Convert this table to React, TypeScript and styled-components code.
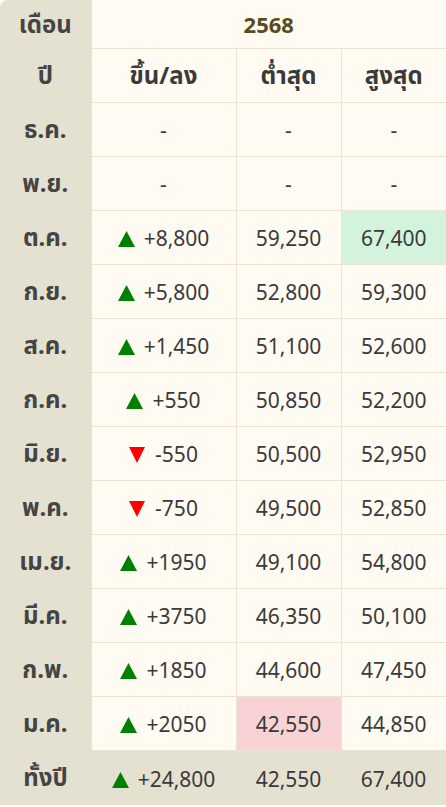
import React from "react";
import styled, { createGlobalStyle } from "styled-components";

const GlobalStyle = createGlobalStyle`
  html, body {
    margin: 0;
    padding: 0;
    background: #ffffff;
  }
  body {
    font-family: "Noto Sans", "Noto Sans Thai", "Liberation Sans", sans-serif;
  }
`;

type Dir = "up" | "down" | "none";

type Row = {
  month: string;
  change: string;
  dir: Dir;
  low: string;
  high: string;
  mark?: "low" | "high";
};

const ROWS: Row[] = [
  { month: "ธ.ค.", change: "-", dir: "none", low: "-", high: "-" },
  { month: "พ.ย.", change: "-", dir: "none", low: "-", high: "-" },
  { month: "ต.ค.", change: "+8,800", dir: "up", low: "59,250", high: "67,400", mark: "high" },
  { month: "ก.ย.", change: "+5,800", dir: "up", low: "52,800", high: "59,300" },
  { month: "ส.ค.", change: "+1,450", dir: "up", low: "51,100", high: "52,600" },
  { month: "ก.ค.", change: "+550", dir: "up", low: "50,850", high: "52,200" },
  { month: "มิ.ย.", change: "-550", dir: "down", low: "50,500", high: "52,950" },
  { month: "พ.ค.", change: "-750", dir: "down", low: "49,500", high: "52,850" },
  { month: "เม.ย.", change: "+1950", dir: "up", low: "49,100", high: "54,800" },
  { month: "มี.ค.", change: "+3750", dir: "up", low: "46,350", high: "50,100" },
  { month: "ก.พ.", change: "+1850", dir: "up", low: "44,600", high: "47,450" },
  { month: "ม.ค.", change: "+2050", dir: "up", low: "42,550", high: "44,850", mark: "low" },
];

const Table = styled.table`
  width: 446px;
  border-collapse: collapse;
  border-spacing: 0;
  table-layout: fixed;
  background: #fffaf2;
  color: #3a3a3a;
  font-size: 21px;
`;

const Side = styled.th<{ $corner?: boolean }>`
  width: 91px;
  background: #e5e1d0;
  color: #444444;
  font-size: 24px;
  line-height: 1.2;
  font-weight: 700;
  text-align: center;
  padding: 0;
  border: none;
  border-top-left-radius: ${(p) => (p.$corner ? "8px" : "0")};
`;

const Head = styled.th<{ $tall?: boolean; $last?: boolean }>`
  height: ${(p) => (p.$tall ? "53px" : "48px")};
  font-size: 24px;
  line-height: 1.2;
  font-weight: 700;
  text-align: center;
  padding: 0;
  color: #3a3a3a;
  border: 1px solid #ebe4d2;
  border-top: none;
  border-right: ${(p) => (p.$last ? "none" : "1px solid #ebe4d2")};
`;

const Year = styled(Head)`
  color: #5b4a1c;
  font-size: 22px;
`;

const Cell = styled.td<{ $mark?: "low" | "high"; $last?: boolean }>`
  height: 53px;
  text-align: center;
  padding: 0;
  border: 1px solid #ebe4d2;
  border-right: ${(p) => (p.$last ? "none" : "1px solid #ebe4d2")};
  background: ${(p) =>
    p.$mark === "high" ? "#d4f3dc" : p.$mark === "low" ? "#f8d2d4" : "transparent"};
`;

const ArrowIcon = styled.svg`
  display: inline-block;
  vertical-align: -1px;
  margin-right: 9px;
`;

const FootRow = styled.tr`
  background: #e5e1d0;
`;

const FootCell = styled.td`
  height: 52px;
  text-align: center;
  padding: 0;
  padding-top: 2px;
`;

const Arrow = ({ dir }: { dir: "up" | "down" }) => (
  <ArrowIcon width="17" height="16" viewBox="0 0 17 16">
    {dir === "up" ? (
      <polygon points="8.5,0 17,16 0,16" fill="#008000" />
    ) : (
      <polygon points="0,0 16,0 8,16" fill="#ff0000" />
    )}
  </ArrowIcon>
);

const Change = ({ row }: { row: Row }) =>
  row.dir === "none" ? (
    <>{row.change}</>
  ) : (
    <>
      <Arrow dir={row.dir} />
      {row.change}
    </>
  );

export default function App() {
  return (
    <>
      <GlobalStyle />
      <Table>
        <colgroup>
          <col style={{ width: 91 }} />
          <col style={{ width: 145 }} />
          <col style={{ width: 105 }} />
          <col style={{ width: 105 }} />
        </colgroup>
        <thead>
          <tr>
            <Side $corner>เดือน</Side>
            <Year colSpan={3} $last>
              2568
            </Year>
          </tr>
          <tr>
            <Side>ปี</Side>
            <Head $tall>ขึ้น/ลง</Head>
            <Head $tall>ต่ำสุด</Head>
            <Head $tall $last>
              สูงสุด
            </Head>
          </tr>
        </thead>
        <tbody>
          {ROWS.map((r) => (
            <tr key={r.month}>
              <Side>{r.month}</Side>
              <Cell>
                <Change row={r} />
              </Cell>
              <Cell $mark={r.mark === "low" ? "low" : undefined}>{r.low}</Cell>
              <Cell $last $mark={r.mark === "high" ? "high" : undefined}>
                {r.high}
              </Cell>
            </tr>
          ))}
          <FootRow>
            <Side>ทั้งปี</Side>
            <FootCell>
              <Arrow dir="up" />
              +24,800
            </FootCell>
            <FootCell>42,550</FootCell>
            <FootCell>67,400</FootCell>
          </FootRow>
        </tbody>
      </Table>
    </>
  );
}
